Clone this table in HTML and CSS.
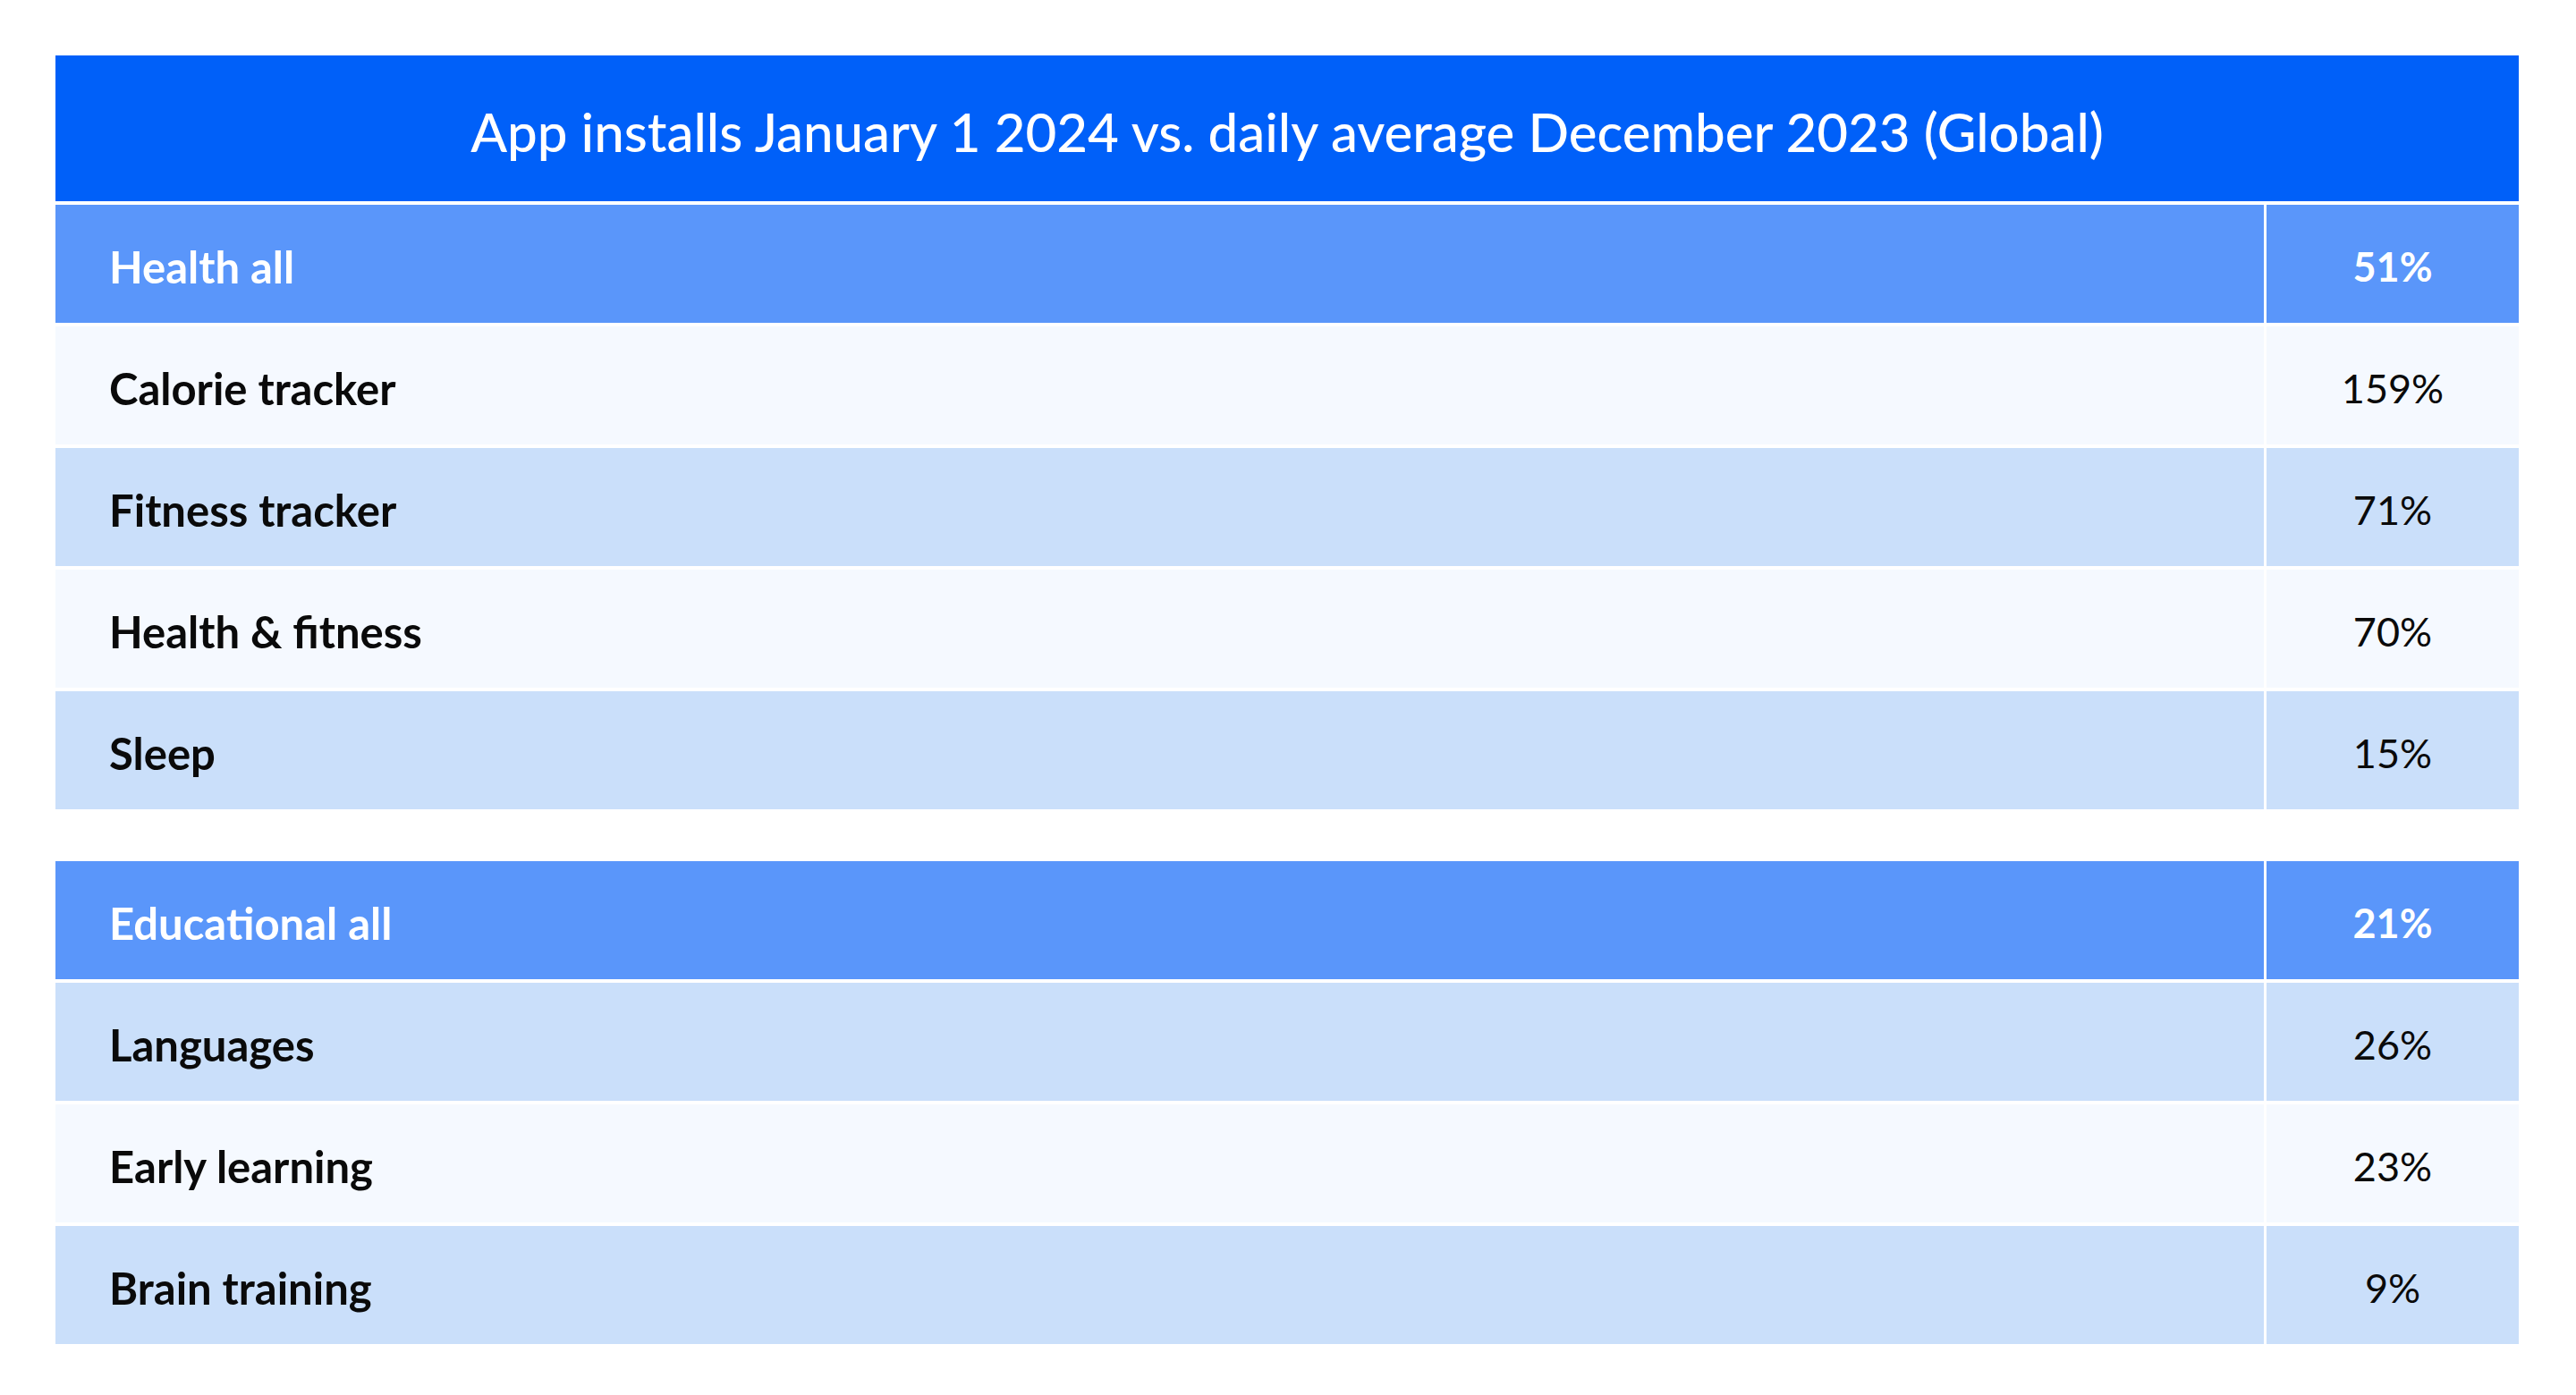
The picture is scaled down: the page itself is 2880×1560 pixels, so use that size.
FILE: index.html
```html
<!DOCTYPE html>
<html lang="en">
<head>
<meta charset="utf-8">
<title>App installs January 1 2024 vs. daily average December 2023 (Global)</title>
<link rel="stylesheet" href="styles.css">
</head>
<body>
<main class="page">
  <section class="table">
    <div class="title">App installs January 1 2024 vs. daily average December 2023 (Global)</div>
    <div class="cell label head">Health all</div>
    <div class="cell value head">51%</div>
    <div class="cell label light">Calorie tracker</div>
    <div class="cell value light">159%</div>
    <div class="cell label dark">Fitness tracker</div>
    <div class="cell value dark">71%</div>
    <div class="cell label light">Health &amp; fitness</div>
    <div class="cell value light">70%</div>
    <div class="cell label dark">Sleep</div>
    <div class="cell value dark">15%</div>
  </section>
  <section class="table">
    <div class="cell label head">Educational all</div>
    <div class="cell value head">21%</div>
    <div class="cell label dark">Languages</div>
    <div class="cell value dark">26%</div>
    <div class="cell label light">Early learning</div>
    <div class="cell value light">23%</div>
    <div class="cell label dark">Brain training</div>
    <div class="cell value dark">9%</div>
  </section>
</main>
</body>
</html>
```

FILE: styles.css
```css
html, body {
  margin: 0;
  padding: 0;
  background: #ffffff;
}

body {
  font-family: "Lato", "Noto Sans", sans-serif;
  color: #0a0a0a;
}

.page {
  padding: 62px 64px 0 62px;
  display: flex;
  flex-direction: column;
  gap: 58px;
}

.table {
  display: grid;
  grid-template-columns: 1fr 282px;
  column-gap: 3px;
  row-gap: 4px;
}

.title {
  grid-column: 1 / -1;
  height: 163px;
  background: #0060f9;
  color: #ffffff;
  font-size: 60px;
  font-weight: 500;
  display: flex;
  align-items: center;
  justify-content: center;
  padding-top: 6px;
  box-sizing: border-box;
}

.cell {
  height: 132px;
  display: flex;
  align-items: center;
  font-size: 49px;
  padding-top: 6px;
  box-sizing: border-box;
}

.label {
  padding-left: 60px;
  font-weight: 700;
}

.value {
  justify-content: center;
  font-size: 45px;
  font-weight: 400;
}

.head {
  background: #5a96fa;
  color: #ffffff;
  font-weight: 700;
}

.light {
  background: #f5f9ff;
}

.dark {
  background: #cadffa;
}
```
